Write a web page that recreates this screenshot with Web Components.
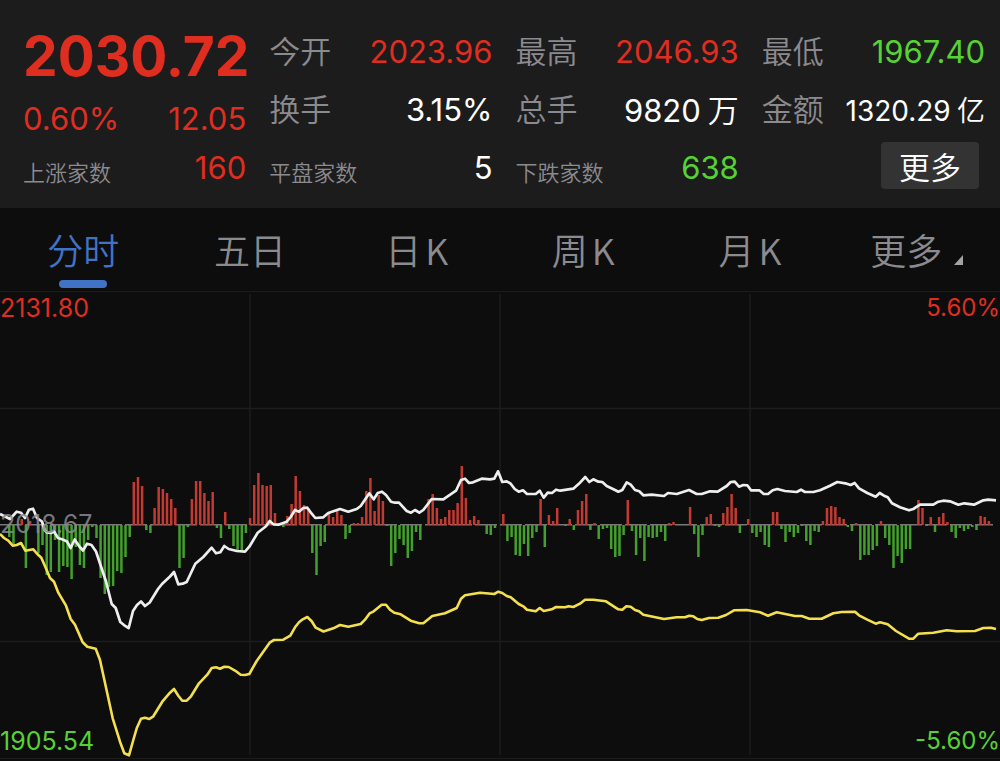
<!DOCTYPE html>
<html lang="zh-CN">
<head>
<meta charset="utf-8">
<meta name="viewport" content="width=device-width, initial-scale=1">
<title>分时行情</title>
<style>
  html { background: #0d0d0d; }
  body {
    margin: 0;
    color: #fff;
    font-family: Inter, "Noto Sans CJK SC", sans-serif;
    --rise: #df2e20;
    --fall: #57d234;
    --muted: #8b8a8f;
    --accent: #4272c4;
    --line: #1c1c1c;
  }
</style>
</head>
<body>
<market-page></market-page>

<script>
class BaseElement extends HTMLElement {
  constructor() {
    super();
    this.attachShadow({ mode: "open" }).innerHTML = this.constructor.markup;
  }
}

customElements.define("quote-row", class extends BaseElement {
  static markup = `
    <style>
      :host { display: flex; align-items: center; justify-content: space-between; height: 58px; white-space: nowrap; font-size: 31px; line-height: 40px; }
      :host([tone="rise"]) { color: var(--rise); }
      :host([tone="fall"]) { color: var(--fall); }
      :host([compact]) { font-size: 28px; }
      .label { color: var(--muted); font-size: 31px; font-weight: 350; }
      :host([small]) .label { font-size: 22px; padding-top: 10px; }
    </style>
    <span class="label"><slot name="label"></slot></span>
    <span><slot></slot></span>`;
});

customElements.define("quote-unit", class extends BaseElement {
  static markup = `
    <style>:host { display: inline; font-family: "Noto Sans CJK SC", sans-serif; font-weight: 350; }</style><slot></slot>`;
});

customElements.define("last-price", class extends BaseElement {
  static markup = `
    <style>
      :host { display: block; color: var(--rise); }
      .price { height: 66px; font-size: 55px; line-height: 66px; font-weight: 650; }
      .change { display: flex; justify-content: space-between; height: 50px; font-size: 31px; line-height: 60px; }
    </style>
    <div class="price"><slot name="price"></slot></div>
    <div class="change"><slot name="percent"></slot><slot name="amount"></slot></div>`;
});

customElements.define("more-button", class extends BaseElement {
  static markup = `
    <style>
      :host { display: flex; justify-content: flex-end; padding: 3px 6px 0 0; }
      button { width: 98px; height: 47px; padding: 0; border: 0; border-radius: 4px; background: #333; color: #fff; font: 350 31px/47px "Noto Sans CJK SC", sans-serif; }
    </style>
    <button type="button"><slot></slot></button>`;
});

customElements.define("quote-header", class extends BaseElement {
  static markup = `
    <style>
      :host { display: grid; grid-template-columns: repeat(4, minmax(0, 1fr)); column-gap: 23px; padding: 23px 15px 11px 23px; background: #1c1c1c; }
    </style>
    <div>
      <last-price>
        <span slot="price">2030.72</span><span slot="percent">0.60%</span><span slot="amount">12.05</span>
      </last-price>
      <quote-row small tone="rise"><span slot="label">上涨家数</span>160</quote-row>
    </div>
    <div>
      <quote-row tone="rise"><span slot="label">今开</span>2023.96</quote-row>
      <quote-row><span slot="label">换手</span>3.15%</quote-row>
      <quote-row small><span slot="label">平盘家数</span>5</quote-row>
    </div>
    <div>
      <quote-row tone="rise"><span slot="label">最高</span>2046.93</quote-row>
      <quote-row><span slot="label">总手</span>9820<quote-unit>万</quote-unit></quote-row>
      <quote-row small tone="fall"><span slot="label">下跌家数</span>638</quote-row>
    </div>
    <div>
      <quote-row tone="fall"><span slot="label">最低</span>1967.40</quote-row>
      <quote-row compact><span slot="label">金额</span>1320.29<quote-unit>亿</quote-unit></quote-row>
      <more-button>更多</more-button>
    </div>`;
});

customElements.define("period-tab", class extends BaseElement {
  static markup = `
    <style>
      :host { display: block; color: var(--muted); }
      :host([selected]) { color: var(--accent); }
      button { display: flex; flex-direction: column; align-items: center; width: 100%; height: 83px; padding: 13px 0 0; border: 0; background: none; color: inherit; font: 350 36px/56px "Noto Sans CJK SC", sans-serif; }
      i { width: 48px; height: 8px; margin-top: 3px; border-radius: 4px; }
      :host([selected]) i { background: var(--accent); }
    </style>
    <button type="button"><span><slot></slot></span><i></i></button>`;
});

customElements.define("period-tabs", class extends BaseElement {
  static markup = `
    <style>
      :host { display: grid; grid-template-columns: repeat(6, minmax(0, 1fr)); border-bottom: 1px solid var(--line); }
      .k { margin-left: 4px; }
      svg { width: 9px; height: 10px; margin-left: 12px; }
    </style>
    <period-tab selected>分时</period-tab>
    <period-tab>五日</period-tab>
    <period-tab>日<span class="k">K</span></period-tab>
    <period-tab>周<span class="k">K</span></period-tab>
    <period-tab>月<span class="k">K</span></period-tab>
    <period-tab>更多<svg viewBox="0 0 9 10" aria-hidden="true"><path d="M9 0V10H0Z" fill="#a3a3a7"/></svg></period-tab>`;
});

/* One entry per slot: negative rises above the axis, positive falls below. */
const FLOW = [
  0,0,12,19,0,-6,43,-4,0,28,20,50,47,15,47,41,42,54,22,40,43,15,2,13,53,69,62,61,46,48,32,12,
  -43,-48,-39,5,8,-17,-38,-36,-32,-26,-17,43,33,2,-26,-44,-44,-32,-24,-33,3,13,-13,4,21,25,25,8,
  -7,-40,-52,-40,-39,-40,-12,0,2,-9,-21,-49,-34,-20,-17,28,50,21,17,-12,-8,-14,-10,14,8,-2,-2,-8,-34,-47,
  -14,-30,-24,1,41,28,14,20,33,26,7,15,0,-26,-31,-17,-6,-8,-15,-15,-22,-59,-27,-5,-9,-5,0,9,10,3,
  0,-11,16,12,30,31,19,31,13,7,-26,22,-10,-4,-17,0,1,-6,5,-15,-24,-31,5,-2,14,4,3,24,32,31,
  10,-25,6,30,13,36,12,13,12,7,16,-2,-3,0,0,0,-18,9,32,10,-8,-11,1,2,-12,-18,-31,-17,8,0,
  -6,8,12,7,20,22,-13,-13,4,17,7,12,8,1,16,20,6,7,-4,-17,-19,-18,-8,-6,2,6,-2,35,30,30,
  25,21,-4,13,20,43,31,38,24,24,0,-25,-17,1,-8,7,-8,-12,-3,7,13,3,6,4,2,5,-9,-8,-4
];
const PRICE = "0,514 10,519 16.7,511.7 21,512.7 25,518 29,509.7 33,508.7 37,518 42,521.5 44.5,530 47,532.5 51,533 54,531.5 58,538 62.7,539.5 67,541.5 70.7,548 74.7,539.5 79,546 83,550.5 87,543.7 91.5,545 96,551.5 101.5,568 106,581.5 111.7,604 115.7,608 120.3,622 124.3,625.3 128.7,628 133,611 137,605 141,601.5 145,606 149.7,602.5 158,589 162,584 170,576.5 174,572 178.3,584.3 182.7,583.7 186.7,582 195.3,563.7 203.3,557 211.7,547.7 216,553.3 220.3,552.3 224.3,546 228.7,549 236.7,551 245,551.7 249.3,546.7 257.7,532.7 266,526.3 269.7,521 273.3,524.3 278.3,524.7 286.7,521.7 290.7,517 295,510 299,511.7 303.3,508 307.3,507.7 311.7,513.7 315.3,518 323.3,517.3 328.3,513 340,509 348.3,511.7 356.7,509 360.7,506 369.3,493.3 373.7,499.3 377.7,493 382,491.7 386,495 391,501.7 395,502.7 399,502.7 406.7,511 411,512.7 415,510 419.3,512.7 423.3,510 431.7,499 443.3,499.3 456,490.7 461,480 465,478.7 469,483 473,482.3 481.7,478.7 490,479.3 494.3,478.7 498,471.3 502.3,482 506.7,481.3 510.7,483.7 514.7,489 518.7,491.7 523,490.3 527,494 535.7,494 539.7,490.7 543.7,497.7 547.7,492.7 552,493 556,489.7 560.3,490.7 573.3,488.7 580,482.7 585.3,477 589.3,482 593.3,479.3 598.3,481.7 602.3,482 606.7,486 615,490 618.3,491.7 622.3,490 626.7,482.3 630.7,484.7 635,490 639.3,491.3 643.3,495.3 651.7,494.7 664,496 668,493 676.7,494 689,490 696.7,494 701.7,494 710,491.3 717.7,491.7 726.7,486 730.7,482 734.7,481.7 739,486.7 743.3,485 747.3,485.3 751,490.3 759.3,490.3 763.7,494 768,494 772.7,490.3 777.3,489 785,491 796.7,492 801,489.7 805,492 813.3,492 820,490.3 830,485.7 837.3,482 846.7,483.7 850.7,485 854.7,483 859,488.3 867.3,493 875.7,496.7 879.7,493 884,495.7 887.7,497.3 892,503.3 900,507.3 909,510.3 913.3,509 920,504.7 933.3,504.7 938.3,501.7 943.3,500.7 950,501.3 958.3,504.7 964.3,503.3 974,504.7 983.3,500.3 988.3,499.7 996,500.3";
const AVERAGE = "0,534 4,538 8.3,540.7 12.7,545.7 16.7,545 21,543 25.3,550.7 33.3,549.3 37.3,554 41.3,557.7 45.7,567.7 50,578 54,581.7 58.3,592.7 66,605.7 70.7,619 75,624.7 82.7,642.3 87.3,646.7 95.7,648.7 100,660 112.7,718.3 120,741.7 124.3,753.3 129,755.3 133.3,740 136.7,728.3 141,718.7 145,717.7 149.3,719 153.3,716.3 162.3,701.7 170,692.7 174,689 178.3,695.7 182.3,700.7 186.7,700.7 191,696.3 199,683.3 207.3,674.7 211.7,668 216,667.3 220,668.7 224.3,666.7 228.7,667 236.7,671.7 240.7,674.7 245,675 249.3,674 256.7,661 270,642.3 274,640 283.3,639.7 290.3,635.7 295,627.3 299,622.3 302.7,619.3 307.3,617 311.7,621.3 315.7,627.7 323.5,631.5 333.3,628.3 340,625 348.3,626.7 360.7,624 365,619.7 369.7,613.3 373.7,611.3 381.7,604.7 386,604.7 390,609.7 394.3,612.7 400.7,614.3 410.7,620.7 419.3,623.3 423.3,623.3 432.3,616 445,613.3 456.7,608 461,598.7 465,595.3 480,592.7 494.3,594 498.3,591.7 502.3,593 506.7,596 510.7,597.3 518.7,604 523.3,606.3 527,609.7 535.7,611.3 539.7,608 543.7,611 551.7,609.3 556,607 565,607.3 568.7,606.3 573.3,607 580,603.7 585,599.7 593.3,599.7 606,601.3 618.3,609.3 622.3,609.7 626.3,606.3 630.7,606.7 635,610 639,611.3 643.3,614.7 664,619 676.7,617.3 685,617.3 689.3,615.7 693.3,616.3 697.3,619 701.7,620 709,618 718.3,617.7 726,615 734,610.3 746.7,610 760,612.3 768,615.7 776.7,612.3 795,616 801.7,616 809.3,618.7 821.7,618.7 833.3,613.3 841.7,612 855,611.7 859,615.3 867.3,619.7 875.7,623.7 880,622.3 887.7,624.3 896,631 909,638.7 913.3,638.7 918.3,633.7 933.3,632.7 946.7,630.3 956.7,631.3 975,631 983.3,628 990.7,627.7 996,629";

customElements.define("trend-chart", class extends BaseElement {
  static markup = `
    <style>
      :host { display: block; position: relative; border-bottom: 1px solid var(--line); font-size: 25px; line-height: 24px; }
      svg { display: block; width: 100%; height: auto; }
      span { position: absolute; }
      .top { top: 4px; color: var(--rise); }
      .mid { top: calc(50% - 13px); color: #8b8a8fdd; }
      .low { bottom: 5px; color: var(--fall); }
      .left { left: 0; }
      .right { right: 0; font-size: 24px; }
    </style>
    <svg viewBox="0 292 1000 466" role="img" aria-label="分时走势">
      <path d="M0 408.5H1000M0 641.5H1000M250 294V755M500 294V755M750 294V755" stroke="#1d1d1d" stroke-width="1.5" fill="none"/>
      <path d="M0 524.7H993" stroke="#777" stroke-width="1.5" stroke-dasharray="22 3"/>
      <path class="up" stroke="#c23a32" stroke-width="2.5"/>
      <path class="down" stroke="#43a02c" stroke-width="2.5"/>
      <polyline points="${AVERAGE}" fill="none" stroke="#f4e04f" stroke-width="2.6" stroke-linejoin="round"/>
      <polyline points="${PRICE}" fill="none" stroke="#eee" stroke-width="2.7" stroke-linejoin="round"/>
    </svg>
    <span class="top left">2131.80</span>
    <span class="top right">5.60%</span>
    <span class="mid left">2018.67</span>
    <span class="low left">1905.54</span>
    <span class="low right">-5.60%</span>`;
  connectedCallback() {
    const bars = (keep) => FLOW.map((v, i) => keep(v) ? `M${(1 + i * 4.151).toFixed(1)} 525v${v}` : "").join("");
    this.shadowRoot.querySelector(".up").setAttribute("d", bars((v) => v < 0));
    this.shadowRoot.querySelector(".down").setAttribute("d", bars((v) => v > 0));
  }
});

customElements.define("market-page", class extends BaseElement {
  static markup = `
    <style>:host { display: block; }</style>
    <quote-header></quote-header>
    <period-tabs></period-tabs>
    <trend-chart></trend-chart>`;
});
</script>
</body>
</html>
